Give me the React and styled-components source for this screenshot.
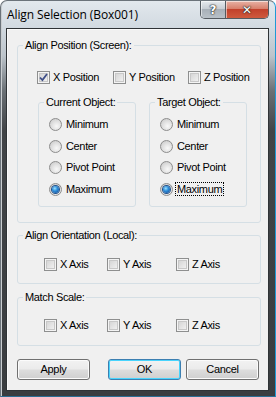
import styled, { createGlobalStyle } from 'styled-components';

const GlobalStyle = createGlobalStyle`
  html, body {
    margin: 0;
    padding: 0;
    background: #ffffff;
  }

  body {
    font-family: "Liberation Sans", Arial, sans-serif;
  }
`;

const Window = styled.div`
  width: 276px;
  height: 397px;
  box-sizing: border-box;
  display: flex;
  flex-direction: column;
  border: 1px solid #6b737a;
  border-right-color: #1f9ad6;
  border-bottom-color: #2b6f95;
  border-radius: 7px 7px 0 0;
  background: linear-gradient(180deg, #e2e8ed 0px, #d2dae1 26px, #bcc4cb 55px, #6a7075 90px, #414447 130px, #3a3d40 100%);
  box-shadow: inset 1px 0 0 #c9cdd0;
`;

const TitleBar = styled.div`
  height: 27px;
  display: flex;
  align-items: flex-start;
  padding: 0 6px 0 6px;
`;

const Title = styled.div`
  font-family: "Open Sans", "Noto Sans", sans-serif;
  font-size: 12px;
  line-height: 16px;
  color: #000;
  padding-top: 6px;
  letter-spacing: -0.1px;
`;

const CaptionButtons = styled.div`
  margin-left: auto;
  display: flex;
  border: 1px solid #555b61;
  border-top: none;
  border-radius: 0 0 5px 5px;
  overflow: hidden;
  height: 17px;
`;

const CaptionButton = styled.div`
  width: ${p => p.$w}px;
  display: flex;
  align-items: center;
  justify-content: center;
  font-family: "DejaVu Sans", sans-serif;
  font-weight: bold;
  font-size: 12px;
  color: #fff;
  text-shadow: 0 0 1px #222, 0 0 1px #222, 0 0 2px #333;
  background: ${p => p.$close
    ? 'linear-gradient(180deg, #e8b2a6 0%, #d8806c 45%, #c2412c 50%, #cf5a3e 100%)'
    : 'linear-gradient(180deg, #e6eaee 0%, #c8ced4 45%, #a8b0b8 50%, #b9c1c8 100%)'};
  box-shadow: inset 1px 1px 0 rgba(255, 255, 255, 0.55);
  & + & {
    border-left: 1px solid #555b61;
  }
`;

const Client = styled.div`
  flex: 1;
  margin: 0 6px 5px 5px;
  border: 1px solid #2f3336;
  background: #f0f0f0;
  box-shadow: inset 1px 1px 0 #fbfbfb;
  padding: 10px 7px 10px 10px;
  display: flex;
  flex-direction: column;
  font-size: 11px;
  color: #000;
  letter-spacing: -0.35px;
`;

// legend sits at the content edge, so pull it back over the left padding
const Group = styled.fieldset`
  margin: 0;
  margin-top: ${p => p.$gap || 0}px;
  padding: ${p => `${p.$top}px ${p.$right || 0}px ${p.$bottom}px ${p.$left}px`};
  border: 1px solid #d5dfe5;
  border-radius: 3px;
  min-width: 0;

  & > legend {
    margin-left: ${p => 5 - p.$left}px;
  }
`;

const Legend = styled.legend`
  padding: 0 2px;
  font-size: 11px;
  line-height: 13px;
`;

const CheckRow = styled.div`
  display: grid;
  grid-template-columns: ${p => p.$cols};
  height: 13px;
`;

const Option = styled.label`
  display: flex;
  align-items: center;
  gap: ${p => p.$gap || 3}px;
  height: 13px;
  line-height: 13px;
  white-space: nowrap;
`;

const Box = styled.span`
  width: 13px;
  height: 13px;
  box-sizing: border-box;
  border: 1px solid #8e8f8f;
  box-shadow: inset 0 0 0 1px #f4f4f4, inset 0 0 0 2px #c8c8c8;
  background-image: linear-gradient(135deg, #cfcfcf 0%, #f7f7f7 100%);
  display: flex;
  align-items: center;
  justify-content: center;
  flex: none;
`;

const Radio = styled.span`
  width: 13px;
  height: 13px;
  box-sizing: border-box;
  border-radius: 50%;
  border: 1px solid #8d8d8d;
  background: radial-gradient(circle at 60% 65%, #f8f8f8 0%, #e2e2e2 45%, #c4c4c4 100%);
  display: flex;
  align-items: center;
  justify-content: center;
  flex: none;
`;

const Dot = styled.span`
  width: 7px;
  height: 7px;
  border-radius: 50%;
  background: radial-gradient(circle at 40% 35%, #9fe3ff 0%, #2f8fdb 40%, #0b3f8a 100%);
  box-shadow: 0 0 0 1px #20508a;
`;

const Focus = styled.span`
  outline: 1px dotted #000;
  line-height: 12px;
  padding: 0 1px;
  margin-left: -1px;
`;

const SubGroups = styled.div`
  display: grid;
  grid-template-columns: 98px 98px;
  column-gap: 13px;
  margin-top: 12px;
`;

const RadioList = styled.div`
  display: flex;
  flex-direction: column;
  gap: 8.5px;
`;

const Buttons = styled.div`
  display: flex;
  margin-top: 13px;
`;

const Button = styled.button`
  width: 73px;
  height: 21px;
  margin-left: ${p => p.$ml || 0}px;
  padding: 0;
  font-family: "Liberation Sans", Arial, sans-serif;
  font-size: 11px;
  letter-spacing: -0.3px;
  color: #000;
  border: 1px solid ${p => p.$default ? '#3c7fb1' : '#707070'};
  border-radius: 3px;
  background: linear-gradient(180deg, #f2f2f2 0%, #ebebeb 48%, #dddddd 52%, #cfcfcf 100%);
  box-shadow: inset 0 0 0 1px ${p => p.$default ? '#48d4fd' : '#fbfbfb'};
`;

const CheckBox = ({ checked, label }) => (
  <Option>
    <Box>
      {checked && (
        <svg width="9" height="9" viewBox="0 0 9 9">
          <path d="M1 4.5 L3.4 7 L8 1" fill="none" stroke="#3f4f88" strokeWidth="1.8" />
        </svg>
      )}
    </Box>
    {label}
  </Option>
);

const RadioOption = ({ checked, label, focused }) => (
  <Option $gap={4}>
    <Radio>{checked && <Dot />}</Radio>
    {focused ? <Focus>{label}</Focus> : label}
  </Option>
);

const ObjectGroup = ({ title, focused }) => (
  <Group $top={9} $bottom={10} $left={10}>
    <Legend>{title}</Legend>
    <RadioList>
      <RadioOption label="Minimum" />
      <RadioOption label="Center" />
      <RadioOption label="Pivot Point" />
      <RadioOption label="Maximum" checked focused={focused} />
    </RadioList>
  </Group>
);

const AxisGroup = ({ title, gap, top, bottom }) => (
  <Group $gap={gap} $top={top} $bottom={bottom} $left={26}>
    <Legend>{title}</Legend>
    <CheckRow $cols="63px 69px auto">
      <CheckBox label="X Axis" />
      <CheckBox label="Y Axis" />
      <CheckBox label="Z Axis" />
    </CheckRow>
  </Group>
);

export default function App() {
  return (
    <>
      <GlobalStyle />
      <Window>
        <TitleBar>
          <Title>Align Selection (Box001)</Title>
          <CaptionButtons>
            <CaptionButton $w={24}>?</CaptionButton>
            <CaptionButton $w={42} $close>✕</CaptionButton>
          </CaptionButtons>
        </TitleBar>
        <Client>
          <Group $top={19} $right={13} $bottom={15} $left={19}>
            <Legend>Align Position (Screen):</Legend>
            <CheckRow $cols="76px 75px auto">
              <CheckBox label="X Position" checked />
              <CheckBox label="Y Position" />
              <CheckBox label="Z Position" />
            </CheckRow>
            <SubGroups style={{ marginLeft: 1 }}>
              <ObjectGroup title="Current Object:" />
              <ObjectGroup title="Target Object:" focused />
            </SubGroups>
          </Group>
          <AxisGroup title="Align Orientation (Local):" gap={6} top={16} bottom={12} />
          <AxisGroup title="Match Scale:" gap={7} top={15} bottom={13} />
          <Buttons>
            <Button>Apply</Button>
            <Button $default $ml={18}>OK</Button>
            <Button $ml={5}>Cancel</Button>
          </Buttons>
        </Client>
      </Window>
    </>
  );
}
